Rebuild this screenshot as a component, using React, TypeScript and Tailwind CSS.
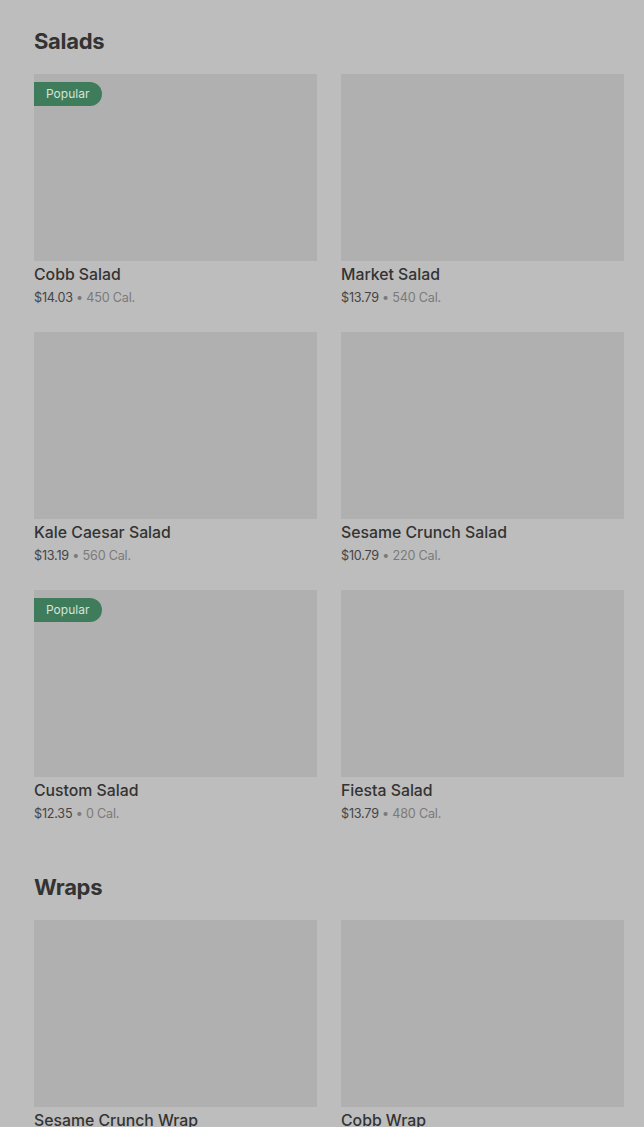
type Item = { name: string; price: string; cal: string; popular?: boolean };

const salads: Item[] = [
  { name: "Cobb Salad", price: "$14.03", cal: "450 Cal.", popular: true },
  { name: "Market Salad", price: "$13.79", cal: "540 Cal." },
  { name: "Kale Caesar Salad", price: "$13.19", cal: "560 Cal." },
  { name: "Sesame Crunch Salad", price: "$10.79", cal: "220 Cal." },
  { name: "Custom Salad", price: "$12.35", cal: "0 Cal.", popular: true },
  { name: "Fiesta Salad", price: "$13.79", cal: "480 Cal." },
];

const wraps: Item[] = [
  { name: "Sesame Crunch Wrap", price: "$11.49", cal: "430 Cal." },
  { name: "Cobb Wrap", price: "$12.59", cal: "510 Cal." },
];

const Card = ({ item }: { item: Item }) => (
  <div className="flex flex-col">
    <div className="relative h-[187px] bg-[#b0b0b0]">
      {item.popular && (
        <span className="absolute left-0 top-2 h-6 pl-3 pr-[13px] rounded-r-full bg-[#3f7c5b] text-[12px] leading-6 text-[#d6e4da]">
          Popular
        </span>
      )}
    </div>
    <div className="mt-[3px] text-[15.8px] leading-[22px] font-medium text-[#333333]">{item.name}</div>
    <div className="mt-[2px] text-[12.6px] leading-[20px] tracking-[-0.2px] text-[#444444]">
      {item.price}
      <span className="text-[#7a7a7a]"> • {item.cal}</span>
    </div>
  </div>
);

const Section = ({ title, items }: { title: string; items: Item[] }) => (
  <section className="pt-[27px] pb-[22px]">
    <h2 className="h-7 text-[22px] leading-7 font-bold tracking-[-0.3px] text-[#333333]">{title}</h2>
    <div className="mt-[19px] grid grid-cols-2 gap-x-6 gap-y-6">
      {items.map((it) => (
        <Card key={it.name} item={it} />
      ))}
    </div>
  </section>
);

export default function App() {
  return (
    <div className="min-h-screen bg-[#bdbdbd] pl-[34px] pr-5 font-['Inter','Liberation_Sans',sans-serif]">
      <Section title="Salads" items={salads} />
      <Section title="Wraps" items={wraps} />
    </div>
  );
}
